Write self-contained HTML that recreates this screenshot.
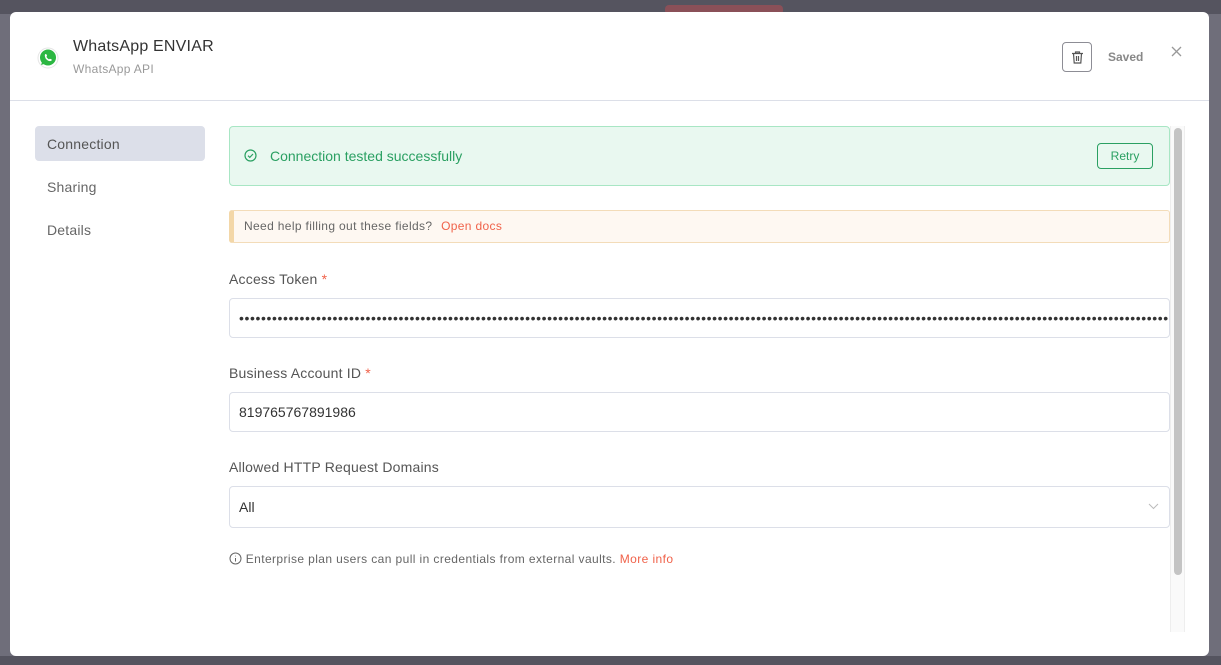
<!DOCTYPE html>
<html><head><style>
*{box-sizing:border-box;margin:0;padding:0}
body{width:1221px;height:665px;overflow:hidden;background:#6f6e7a;font-family:"Liberation Sans",sans-serif;position:relative}
.top{position:absolute;left:0;top:0;width:1221px;height:14px;background:#55545f}
.mid{position:absolute;left:420px;top:0;width:380px;height:665px;background:#797885}
.bot{position:absolute;left:0;top:656px;width:1221px;height:9px;background:#55545f}
.red{position:absolute;left:665px;top:5px;width:118px;height:10px;background:#8a5058;border-radius:4px}
.modal{position:absolute;left:10px;top:12px;width:1199px;height:644px;background:#fff;border-radius:6px;overflow:hidden}
.hdr{height:89px;border-bottom:1px solid #dcdfe8;position:relative}
.title{position:absolute;left:63px;top:26px;font-size:16px;color:#333;letter-spacing:0.2px}
.sub{position:absolute;left:63px;top:50px;font-size:12px;color:#999;letter-spacing:0.3px}
.trash{position:absolute;left:1052px;top:30px;width:30px;height:30px;border:1px solid #8d8d95;border-radius:4px}
.saved{position:absolute;left:1098px;top:38px;font-size:12px;color:#888;font-weight:bold}
.nav{position:absolute;left:25px;top:114px;width:170px}
.nav div{height:35px;line-height:37px;padding-left:12px;font-size:14px;color:#666;margin-bottom:8px;border-radius:4px;letter-spacing:0.2px}
.nav .act{background:#dcdfe9;color:#555}
.ok{position:absolute;left:219px;top:114px;width:941px;height:60px;background:#e9f8f0;border:1px solid #a8e6c4;border-radius:4px}
.ok span{position:absolute;left:40px;top:21px;font-size:14px;color:#2aa062}
.retry{position:absolute;right:16px;top:16px;width:56px;height:26px;border:1px solid #2aa062;border-radius:4px;color:#2aa062;font-size:12px;text-align:center;line-height:24px}
.help{position:absolute;left:219px;top:198px;width:941px;height:33px;background:#fef8f2;border:1px solid #f3dcb9;border-left:5px solid #f3d7a8;border-radius:3px;font-size:12px;color:#666;line-height:31px;padding-left:10px;letter-spacing:0.35px}
.help b{font-weight:normal;color:#f0624a;margin-left:5px}
.lbl{position:absolute;left:219px;font-size:14px;color:#555;letter-spacing:0.2px}
.lbl i{font-style:normal;color:#f0624a}
.inp{position:absolute;left:219px;width:941px;height:40px;border:1px solid #dcdfe8;border-radius:4px;font-size:14px;color:#333;line-height:38px;padding-left:9px;overflow:hidden;white-space:nowrap}
.note{position:absolute;left:219px;top:540px;font-size:12px;color:#666;letter-spacing:0.4px}
.note b{font-weight:normal;color:#f0624a}
.track{position:absolute;left:1160px;top:114px;width:15px;height:506px;background:#fafafa;border-left:1px solid #eee;border-right:1px solid #eee}
.thumb{position:absolute;left:1164px;top:116px;width:8px;height:447px;background:#c4c4c4;border-radius:4px}
</style></head><body>
<div class="mid"></div><div class="top"></div><div class="red"></div><div class="bot"></div>
<div class="modal">
<div class="hdr">
<svg style="position:absolute;left:27px;top:35px" width="22" height="22" viewBox="0 0 22 22"><circle cx="11" cy="11" r="10" fill="#fff" stroke="#e5e5e5"/><circle cx="11" cy="10.5" r="8" fill="#2cb742"/><path d="M4 18l1.5-4 3 2.5z" fill="#2cb742"/><path d="M8 7.5c.5-.8 1.2-.6 1.5 0l.6 1.4-.7.9c.6 1.2 1.5 2 2.6 2.6l.9-.7 1.4.6c.6.3.7 1 0 1.5-1.5 1-4-.3-5.6-2.2C8 10 7.5 8.4 8 7.5z" fill="#fff"/></svg>
<div class="title">WhatsApp ENVIAR</div>
<div class="sub">WhatsApp API</div>
<div class="trash"><svg style="position:absolute;left:9px;top:8px" width="11" height="13" viewBox="0 0 11 13" fill="none" stroke="#555" stroke-width="1.2"><path d="M0 2.5h11M3.5 2.5V1h4v1.5M1.5 2.5l.7 9.5h6.6l.7-9.5M4.5 5v5M6.5 5v5"/></svg></div>
<div class="saved">Saved</div>
<svg style="position:absolute;left:1161px;top:34px" width="11" height="11" stroke="#999" stroke-width="1.3"><path d="M1 1l9 9M10 1l-9 9"/></svg>
</div>
<div class="nav"><div class="act">Connection</div><div>Sharing</div><div>Details</div></div>
<div class="ok"><svg style="position:absolute;left:14px;top:22px" width="13" height="13" viewBox="0 0 13 13" fill="none" stroke="#2aa062" stroke-width="1.2"><circle cx="6.5" cy="6.5" r="5.5"/><path d="M4 6.7l1.8 1.7 3.2-3.4"/></svg><span>Connection tested successfully</span><div class="retry">Retry</div></div>
<div class="help">Need help filling out these fields? <b>Open docs</b></div>
<div class="lbl" style="top:259px">Access Token <i>*</i></div>
<div class="inp" style="top:286px;font-size:14px;letter-spacing:0.6px;color:#333">••••••••••••••••••••••••••••••••••••••••••••••••••••••••••••••••••••••••••••••••••••••••••••••••••••••••••••••••••••••••••••••••••••••••••••••••••••••••••••••••••••••••••••••••••••••••••••••••••••••••••••••</div>
<div class="lbl" style="top:353px">Business Account ID <i>*</i></div>
<div class="inp" style="top:380px">819765767891986</div>
<div class="lbl" style="top:447px">Allowed HTTP Request Domains</div>
<div class="inp" style="top:474px;height:42px;line-height:40px">All<svg style="position:absolute;right:10px;top:16px" width="11" height="7" fill="none" stroke="#bbb"><path d="M1 1l4.5 4.5L10 1"/></svg></div>
<div class="note"><svg style="vertical-align:-2px" width="13" height="13" viewBox="0 0 13 13" fill="none" stroke="#666"><circle cx="6.5" cy="6.5" r="5.5"/><path d="M6.5 6v3.5M6.5 3.8v.6"/></svg> Enterprise plan users can pull in credentials from external vaults. <b>More info</b></div>
<div class="track"></div><div class="thumb"></div>
</div>
</body></html>
